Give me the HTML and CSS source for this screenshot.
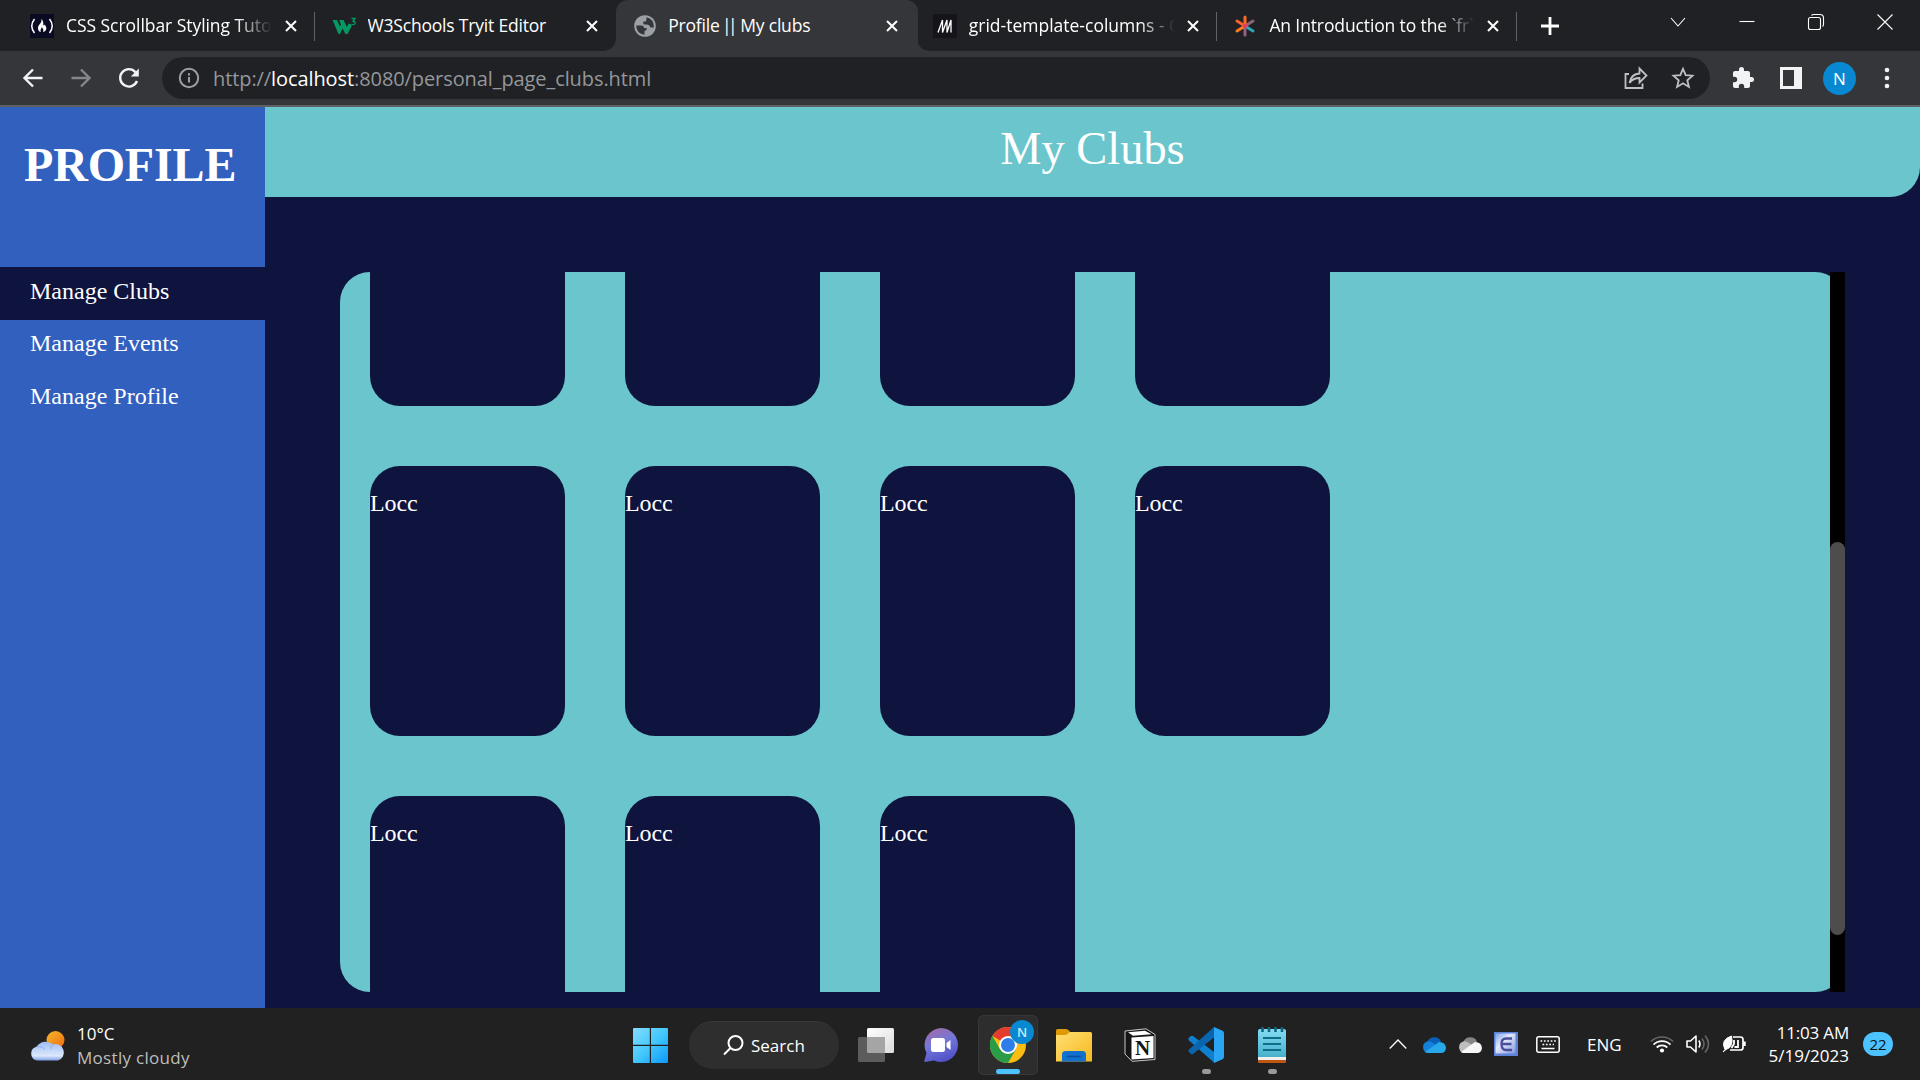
FILE: index.html
```html
<!DOCTYPE html>
<html lang="en">
<head>
<meta charset="utf-8">
<title>Profile || My clubs</title>
<link rel="stylesheet" href="styles.css">
</head>
<body>
<header class="tabs">
  <div class="tab">
    <svg class="fav" viewBox="0 0 24 24"><rect width="24" height="24" fill="#0a0a23"/><path d="M4.500 5Q-1 12 4.500 19M19.500 5Q25 12 19.500 19" fill="none" stroke="#fff" stroke-width="1.500"/><path d="M11 5C13 9 8 10 8 14C8 16.500 9.500 18 11 18C9.500 15.500 12 15 11.500 13C13 14 14 16 13 18C18 17 16.500 12 14.500 10.500C14.500 12.500 13 11.500 13.300 9.500C13.400 7 12.500 6 11 5Z" fill="#fff"/></svg>
    <span class="tab-title fade t1">CSS Scrollbar Styling Tutorial</span>
    <svg class="x" viewBox="0 0 12 12"><path d="M1 1L11 11M11 1L1 11"/></svg>
  </div>
  <div class="tab">
    <svg class="fav" viewBox="0 0 24 24"><path d="M.5 6H5L8 12.500L9 10.500L7.200 6H11.500L15 13L16.500 9.500L19.500 10.500Q20 12 19 13.500L15.500 20H13.500L10.500 14.500L8 20H6.500Z" fill="#059862"/><path d="M19.500 4.500H23L21 7.300Q23.500 7.500 23 9.500Q22 11.500 19.500 10" fill="none" stroke="#059862" stroke-width="1.400"/></svg>
    <span class="tab-title t2">W3Schools Tryit Editor</span>
    <svg class="x" viewBox="0 0 12 12"><path d="M1 1L11 11M11 1L1 11"/></svg>
  </div>
  <div class="tab active">
    <svg class="fav" viewBox="0 0 24 24"><circle cx="13" cy="12" r="10.800" fill="#9aa0a6"/><path d="M4.200 11.500H9.500Q12 11.500 12 14H14.500Q15.500 16 12.500 17V20.700Q4.500 20 4.200 11.500Z" fill="#35363a"/><path d="M14.500 3.300Q22 5 21.800 13.500H18.500Q17.500 10.500 14.500 10.500H12.500Q10.500 10 11.500 7.500H13.500Q14.500 7.500 14.500 3.300Z" fill="#35363a"/></svg>
    <span class="tab-title t3">Profile <span class="bars">||</span> My clubs</span>
    <svg class="x" viewBox="0 0 12 12"><path d="M1 1L11 11M11 1L1 11"/></svg>
  </div>
  <div class="tab">
    <svg class="fav" viewBox="0 0 24 24"><rect width="24" height="24" fill="#15141a"/><path d="M5 18.500L9.500 6V18.500L14 6V18.500M14 18.500L18 6V18.500" fill="none" stroke="#fff" stroke-width="1.300"/></svg>
    <span class="tab-title fade t4">grid-template-columns - CSS</span>
    <svg class="x" viewBox="0 0 12 12"><path d="M1 1L11 11M11 1L1 11"/></svg>
  </div>
  <div class="tab">
    <svg class="fav" viewBox="0 0 24 24" fill="none" stroke-width="3" stroke-linecap="round"><path d="M12 12V21" stroke="#94607f"/><path d="M12 12L20 7" stroke="#8f6473"/><path d="M12 12L20 17" stroke="#2aa7b8"/><path d="M12 12L4 17" stroke="#ff7a18"/><path d="M12 12L4 7" stroke="#f5622d"/><path d="M12 3V12" stroke="#ff6b22"/><circle cx="12" cy="12" r="1.800" fill="#e23a6c" stroke="#e23a6c" stroke-width="1"/></svg>
    <span class="tab-title fade t5">An Introduction to the `fr`</span>
    <svg class="x" viewBox="0 0 12 12"><path d="M1 1L11 11M11 1L1 11"/></svg>
  </div>
  <svg class="newtab" viewBox="0 0 18 18"><path d="M9 0V18M0 9H18"/></svg>
  <div class="winctl">
    <svg viewBox="0 0 16 16"><path d="M1 4L8 12L15 4"/></svg>
    <svg viewBox="0 0 16 16"><path d="M.5 7.500H15.500"/></svg>
    <svg viewBox="0 0 16 16"><rect x=".5" y="3.500" width="12" height="12" rx="2"/><path d="M3.500 1.500Q4 .5 6 .5H12Q15.500 .5 15.500 4V10Q15.500 12 14.500 12.500"/></svg>
    <svg viewBox="0 0 16 16"><path d="M.5 .5L15.500 15.500M15.500 .5L.5 15.500"/></svg>
  </div>
</header>

<div class="toolbar">
  <svg class="nav-ic" viewBox="0 0 24 24"><path d="M21.500 12H4M12 3.500L3.500 12L12 20.500"/></svg>
  <svg class="nav-ic dim" viewBox="0 0 24 24"><path d="M2.500 12H20M12 3.500L20.500 12L12 20.500"/></svg>
  <svg class="nav-ic" viewBox="0 0 24 24"><path d="M20 15A8.700 8.700 0 1 1 18.500 6.200"/><path d="M21.800 2.500V10.500H13.800Z" fill="#f1f3f4" stroke="none"/></svg>
  <div class="omnibox">
    <svg class="info" viewBox="0 0 22 22"><circle cx="11" cy="11" r="9.200"/><path d="M11 10V15.500M11 6.200V8.400"/></svg>
    <span class="url">http://<b>localhost</b>:8080/personal_page_clubs.html</span>
    <svg class="ob-ic" viewBox="0 0 24 24"><path d="M5 8H1.500V22H18.500V17.500"/><path d="M5.500 17Q7 8 15.500 7.500V2.500L22.500 9.500L15.500 16.500V12Q9 12 5.500 17Z"/></svg>
    <svg class="ob-ic star" viewBox="0 0 24 24"><path d="M12 2.800L14.700 9.100L21.500 9.700L16.300 14.200L17.900 20.900L12 17.300L6.100 20.900L7.700 14.200L2.500 9.700L9.300 9.100Z"/></svg>
  </div>
  <svg class="puzzle" viewBox="0 0 24 24"><path d="M20.500 11H19V7C19 5.900 18.100 5 17 5H13V3.500A2.500 2.500 0 0 0 8 3.500V5H4C2.900 5 2 5.900 2 7V10.800H3.500A2.700 2.700 0 0 1 3.500 16.200H2V20C2 21.100 2.900 22 4 22H7.800V20.500A2.700 2.700 0 0 1 13.200 20.500V22H17C18.100 22 19 21.100 19 20V16H20.500A2.500 2.500 0 0 0 20.500 11Z" fill="#f1f3f4"/></svg>
  <svg class="panel-ic" viewBox="0 0 22 22"><path fill-rule="evenodd" d="M0 0H22V22H0ZM3 3V19H14V3Z" fill="#f1f3f4"/></svg>
  <span class="avatar">N</span>
  <svg class="dots" viewBox="0 0 6 22"><circle cx="3" cy="3" r="2.300"/><circle cx="3" cy="11" r="2.300"/><circle cx="3" cy="19" r="2.300"/></svg>
</div>

<div class="page">
  <aside class="sidebar">
    <h1>PROFILE</h1>
    <nav>
      <a class="current">Manage Clubs</a>
      <a>Manage Events</a>
      <a>Manage Profile</a>
    </nav>
  </aside>
  <main>
    <div class="banner">My Clubs</div>
    <section class="clubs">
      <div class="viewport">
        <div class="grid">
          <div class="card"></div><div class="card"></div><div class="card"></div><div class="card"></div>
          <div class="card">Locc</div><div class="card">Locc</div><div class="card">Locc</div><div class="card">Locc</div>
          <div class="card">Locc</div><div class="card">Locc</div><div class="card">Locc</div>
        </div>
      </div>
      <div class="track"><div class="thumb"></div></div>
    </section>
  </main>
</div>

<footer class="taskbar">
  <div class="weather">
    <svg viewBox="0 0 36 32">
      <defs>
        <linearGradient id="sun" x1="0" y1="0" x2="1" y2="1"><stop offset="0" stop-color="#f5b92a"/><stop offset="1" stop-color="#ef6a10"/></linearGradient>
        <linearGradient id="cl" x1="0" y1="0" x2="0" y2="1"><stop offset="0" stop-color="#9dbcf5"/><stop offset=".75" stop-color="#dce8fb"/><stop offset="1" stop-color="#7fa0e6"/></linearGradient>
      </defs>
      <circle cx="25.500" cy="10" r="9" fill="url(#sun)"/>
      <path d="M7 30.500A7 7 0 0 1 6.500 16.800A11 11 0 0 1 23 14.500A8.200 8.200 0 1 1 28 30.500Z" fill="url(#cl)"/>
      <path d="M6.500 16.800Q12 16 15 19.500M21 19Q20.500 15.500 23 14.500" fill="none" stroke="#8fb0ef" stroke-width="1"/>
    </svg>
    <div class="wtext"><span class="w1">10°C</span><span class="w2">Mostly cloudy</span></div>
  </div>
  <div class="apps">
    <svg class="start" viewBox="0 0 35 35">
      <defs><linearGradient id="win" gradientUnits="userSpaceOnUse" x1="0" y1="0" x2="35" y2="35"><stop offset="0" stop-color="#86dcfd"/><stop offset=".5" stop-color="#44c8fb"/><stop offset="1" stop-color="#0c98fb"/></linearGradient></defs>
      <path d="M0 1Q0 0 1 0H16.800V16.800H0ZM18 0H34Q35 0 35 1V16.800H18ZM0 18H16.800V35H1Q0 35 0 34ZM18 18H35V34Q35 35 34 35H18Z" fill="url(#win)"/>
    </svg>
    <div class="search">
      <svg viewBox="0 0 21 21"><circle cx="12.500" cy="8" r="7" /><path d="M7.500 13L1 19.500"/></svg>
      <span>Search</span>
    </div>
    <svg class="taskview" viewBox="0 0 36 34">
      <defs><linearGradient id="tv" x1="0" y1="0" x2="1" y2="1"><stop offset="0" stop-color="#fff"/><stop offset="1" stop-color="#dcdcdc"/></linearGradient></defs>
      <rect x="9" y="0" width="27" height="25" rx="1.500" fill="url(#tv)"/><rect x="0" y="9" width="27" height="25" rx="1.500" fill="#5c5c5c"/><path d="M9 9H27V25H10.500Q9 25 9 23.500Z" fill="#a5a5a5"/></svg>
    <svg class="chat" viewBox="0 0 34 34">
      <defs><linearGradient id="ch" x1=".2" y1="0" x2=".6" y2="1"><stop offset="0" stop-color="#a36aa8"/><stop offset=".45" stop-color="#7478d8"/><stop offset="1" stop-color="#4f50c8"/></linearGradient></defs>
      <path d="M17 0A17 17 0 1 1 10 32.500L1 34Q0 34 .4 32.500L2.500 25A17 17 0 0 1 17 0Z" fill="url(#ch)"/><rect x="7" y="10" width="14" height="14" rx="2.500" fill="#fff"/><path d="M22.500 15L26.500 12V22L22.500 19Z" fill="#fff"/></svg>
    <div class="tile">
      <svg viewBox="0 0 60 60">
        <circle cx="30" cy="30" r="18" fill="#fbbc14"/>
        <path d="M30 30L14.400 21A18 18 0 0 1 45.600 21H30Z" fill="#e33b2e"/>
        <path d="M14.400 21A18 18 0 0 0 30 48L37.800 34.500L22.200 34.500Z" fill="#2a9c48"/>
        <circle cx="30" cy="30" r="9" fill="#fff"/><circle cx="30" cy="30" r="7" fill="#2f7de9"/>
        <circle cx="44" cy="17" r="12" fill="#0788d1"/>
        <text x="44" y="21.800" text-anchor="middle" class="badge-n">N</text>
        <rect x="18" y="54" width="24" height="5" rx="2.500" fill="#4cc2ff"/>
      </svg>
    </div>
    <svg class="folder" viewBox="0 0 36 33">
      <defs><linearGradient id="fo" x1="0" y1="0" x2="1" y2="1"><stop offset="0" stop-color="#ffdf73"/><stop offset="1" stop-color="#f6b91f"/></linearGradient></defs>
      <path d="M0 1.500Q0 0 1.500 0H10Q11.500 0 13 1.500L15 4L10 8H0Z" fill="#dd9a06"/><path d="M0 6H10L14 3H34.500Q36 3 36 4.500V32.500H0Z" fill="url(#fo)"/><path d="M6 32.500V25.500Q6 22 9.500 22H26.500Q30 22 30 25.500V32.500Z" fill="#1271cc"/><path d="M11 27.500H25" stroke="#0b4fa0" stroke-width="1.600"/></svg>
    <svg class="notion" viewBox="0 0 32 34"><path d="M1 3L22 .8L31 6.500V31.500L8 33.300L1 26Z" fill="#151515" stroke="#c9c9c9" stroke-width="1"/><path d="M4 4.200L21 2.700L27.500 6.200L9 7.700Z" fill="#fff"/><path d="M7.500 9.500L29.500 8V30L7.500 31.500Z" fill="#fff"/><text x="18.500" y="27" text-anchor="middle" class="notion-n">N</text></svg>
    <div class="app">
      <svg viewBox="0 0 36 36"><path d="M26 0L26.500 36L1 13.500Q-.5 12 1 10.500L3 9Q4 8.300 5 9L26 25Z" fill="#0f7fd0"/><path d="M26 0V10.500L5 27Q4 27.700 3 27L1 25Q-.5 23.500 1 22.500Z" fill="#0a65ad"/><path d="M26 0L34.500 3.800Q36 4.500 36 6V30Q36 31.500 34.500 32.200L26 36Z" fill="#2aa5f3"/></svg>
      <i></i>
    </div>
    <div class="app pad">
      <svg viewBox="0 0 28 36"><defs><linearGradient id="np" x1="0" y1="0" x2="0" y2="1"><stop offset="0" stop-color="#83dcf2"/><stop offset="1" stop-color="#48b0cc"/></linearGradient></defs><path d="M0 31H28V35Q28 36 27 36H1Q0 36 0 35Z" fill="#bd5610"/><path d="M0 29H28V33H0Z" fill="#f2efed"/><path d="M0 4Q0 2 2 2H26Q28 2 28 4V30H0Z" fill="url(#np)"/><path d="M4.500 0V5M11 0V5M17.500 0V5M24 0V5" stroke="#0e6680" stroke-width="2.600"/><path d="M5 11H23M5 17H23M5 23H23" stroke="#0f6c8a" stroke-width="2"/></svg>
      <i></i>
    </div>
  </div>
  <div class="tray">
    <svg class="chev" viewBox="0 0 18 10"><path d="M.7 9.500L9 1L17.300 9.500" fill="none" stroke="#fff" stroke-width="1.300"/></svg>
    <svg class="cloud" viewBox="0 0 24 17"><path d="M5 7A7.500 7.500 0 0 1 19 5.500L12 12Z" fill="#0a5fb8"/><path d="M6 17A6 6 0 0 1 4.500 5.700Q8 4.500 11 7L17 11L14 17Z" fill="#1380da"/><path d="M3 16L17 6Q23.500 6 24 12Q23.500 17 19 17H6Q4 17 3 16Z" fill="#28a8ea"/></svg>
    <svg class="cloud" viewBox="0 0 24 17"><path d="M5 7A7.500 7.500 0 0 1 19 5.500L12 12Z" fill="#858585"/><path d="M6 17A6 6 0 0 1 4.500 5.700Q8 4.500 11 7L17 11L14 17Z" fill="#bdbdbd"/><path d="M3 16L17 6Q23.500 6 24 12Q23.500 17 19 17H6Q4 17 3 16Z" fill="#f6f6f6"/></svg>
    <svg class="eicon" viewBox="0 0 24 24"><defs><linearGradient id="eg" x1="0" y1="0" x2="1" y2="1"><stop offset="0" stop-color="#7da2ea"/><stop offset=".4" stop-color="#e4e8fb"/><stop offset="1" stop-color="#8098dc"/></linearGradient></defs><rect width="24" height="24" fill="#5e82d8"/><rect x="1.500" y="1.500" width="20" height="20" fill="url(#eg)"/><path d="M18 6.500H12Q7.500 6.500 7.500 12Q7.500 18 12 18H18M8 12H17.500" fill="none" stroke="#4a4f9c" stroke-width="2.400"/></svg>
    <svg class="kbd" viewBox="0 0 24 17" fill="none" stroke="#fff"><rect x=".8" y=".8" width="22.400" height="15.400" rx="2" stroke-width="1.500"/><path d="M4.500 5H20M6.500 8.500H18" stroke-width="1.700" stroke-dasharray="1.700 1.700"/><path d="M5.500 12.500H18.500" stroke-width="1.500"/></svg>
    <span class="lang">ENG</span>
    <svg class="wifi" viewBox="0 0 24 18" fill="none"><path d="M.8 6.500A16 16 0 0 1 23.200 6.500" stroke="#666" stroke-width="1.600"/><path d="M3.500 9.600A12 12 0 0 1 20.500 9.600M6.700 12.500A7.500 7.500 0 0 1 17.300 12.500" stroke="#fff" stroke-width="1.800"/><circle cx="12" cy="15.500" r="2.100" fill="#fff"/></svg>
    <svg class="vol" viewBox="0 0 24 20" fill="none" stroke="#fff" stroke-width="1.600" stroke-linejoin="round"><path d="M1 7H4.500L10 2V18L4.500 13H1Z"/><path d="M12.800 6.500Q15.200 10 12.800 13.500"/><path d="M16 4.500Q20 10 16 15.500M19 1.500Q26 10 19 18.500" stroke="#666"/></svg>
    <svg class="bat" viewBox="0 0 24 18" fill="none" stroke="#fff" stroke-width="1.700"><path d="M11 2H18.500Q21 2 21 4.500V12.500Q21 15 18.500 15H8"/><path d="M22.500 6.500V11" stroke-width="2.400"/><path d="M1 17L3 14.500Q-2 5 9.500 1Q12 12 4 14.500Z" fill="#fff" stroke-width="1"/><path d="M12 5V9L9.500 13M16 5V12H12.500" stroke-width="1.800"/></svg>
    <div class="clock"><span class="c1">11:03 AM</span><span class="c2">5/19/2023</span></div>
    <span class="count">22</span>
  </div>
</footer>
</body>
</html>
```
FILE: styles.css
```css
* { box-sizing: border-box; }
body {
  margin: 0;
  width: 1920px;
  height: 1080px;
  overflow: hidden;
  display: flex;
  flex-direction: column;
  font-family: "Open Sans", "Noto Sans", sans-serif;
  color: #fff;
}
svg { display: block; flex: none; overflow: visible; }

/* tab strip */
.tabs { height: 51px; flex: none; background: #202124; display: flex; align-items: center; padding-left: 14px; }
.tab { width: 300.6px; height: 51px; flex: none; display: flex; align-items: center; padding-left: 16px; position: relative; }
.tab::after { content: ""; position: absolute; left: 300px; top: 12px; width: 1px; height: 29px; background: #5f6368; }
.tab.active::before {
  content: ""; position: absolute; z-index: 0; left: 1px; right: -2px; top: 0; bottom: 0;
  background: #35363a; border-radius: 12px 12px 0 0;
}
.tab.active::after {
  left: -11px; top: auto; bottom: 0; width: 325px; height: 12px;
  background:
    radial-gradient(circle at 0 0, transparent 11.5px, #35363a 12px) left / 12px 12px no-repeat,
    radial-gradient(circle at 100% 0, transparent 11.5px, #35363a 12px) right / 12px 12px no-repeat;
}
.tab:nth-child(2)::after { display: none; }
.tab > * { position: relative; z-index: 1; }
.fav { width: 24px; height: 24px; margin-right: 12px; }
.tab:nth-child(n+2) .fav { margin-left: 1px; }
.tab-title { width: 206px; margin-right: 13px; padding-bottom: 1px; font-size: 17.5px; line-height: 24px; white-space: nowrap; overflow: hidden; }
.tab:nth-child(n+2) .tab-title { margin-right: 12px; }
.t1 { letter-spacing: -0.05px; }
.t2 { letter-spacing: -0.2px; }
.t3 { letter-spacing: -0.2px; }
.bars { letter-spacing: -3.6px; margin: 0 2px 0 -2px; }
.t5 { letter-spacing: -0.12px; }
.fade { -webkit-mask-image: linear-gradient(90deg, #000 170px, transparent 206px); mask-image: linear-gradient(90deg, #000 170px, transparent 206px); }
.x { width: 12px; height: 12px; stroke: #fff; stroke-width: 2; }
.newtab { width: 18px; height: 18px; margin-left: 24px; stroke: #fff; stroke-width: 2.8; }
.winctl { display: flex; gap: 53px; margin: 0 27px 8px auto; }
.winctl svg { width: 16px; height: 16px; fill: none; stroke: #fff; stroke-width: 1.1; }

/* address bar */
.toolbar { height: 56px; flex: none; background: #35363a; border-bottom: 2px solid #5f6063; display: flex; align-items: center; padding-left: 21px; }
.nav-ic { width: 24px; height: 24px; margin-right: 24px; fill: none; stroke: #f1f3f4; stroke-width: 2.4; }
.nav-ic.dim { stroke: #85868a; }
.omnibox { width: 1548px; height: 42px; margin-left: -3px; border-radius: 21px; background: #202124; display: flex; align-items: center; padding-left: 16px; }
.info { width: 22px; height: 22px; fill: none; stroke: #9aa0a6; stroke-width: 2; }
.url { width: 1400px; margin-left: 13px; padding-top: 2px; font-size: 20px; letter-spacing: -0.09px; line-height: 28px; color: #94979b; white-space: nowrap; }
.url b { font-weight: 400; color: #fff; }
.ob-ic { width: 24px; height: 24px; margin-left: 11px; fill: none; stroke: #bdc1c6; stroke-width: 1.8; }
.star { margin-left: 23px; }
.puzzle { width: 24px; height: 24px; margin-left: 21px; }
.panel-ic { width: 22px; height: 22px; margin-left: 25px; }
.avatar { width: 33px; height: 33px; margin-left: 21px; border-radius: 50%; background: #0788d1; font-size: 17px; line-height: 33px; text-align: center; }
.dots { width: 6px; height: 22px; margin-left: 28px; fill: #f1f3f4; }

/* profile page */
.page { height: 901px; flex: none; display: flex; background: #0f143e; font-family: "Liberation Serif", serif; }
.sidebar { width: 265px; background: #3260be; }
.sidebar h1 { margin: 0; height: 160px; padding: 30px 0 0 24px; font-size: 48px; line-height: 55px; font-weight: bold; letter-spacing: -0.15px; }
.sidebar a { display: block; height: 53px; padding: 10px 0 0 30px; font-size: 24px; line-height: 27px; }
.sidebar a.current { padding-top: 11px; background: #0f143e; }
main { flex: 1; }
.banner { height: 90px; padding-top: 16px; background: #6ac5cc; border-bottom-right-radius: 30px; text-align: center; font-size: 46.4px; line-height: 52px; }
.clubs { margin: 75px 75px 0; height: 720px; display: flex; background: #6ac5cc; border-radius: 30px; }
.viewport { flex: 1; overflow: hidden; padding-left: 30px; }
.grid { display: grid; grid-template-columns: repeat(4, 195px); grid-auto-rows: 270px; gap: 60px; margin-top: -136px; }
.card { background: #0f143e; border-radius: 30px; padding-top: 24px; font-size: 24px; line-height: 27px; letter-spacing: -0.1px; }
.track { width: 15px; background: #000; padding-top: 270px; }
.thumb { height: 393px; border-radius: 8px; background: #4d4d4d; }

/* taskbar */
.taskbar { height: 72px; flex: none; background: #212121; display: flex; align-items: center; padding-left: 30px; font-size: 17px; }
.weather { width: 603px; display: flex; align-items: center; }
.weather svg { width: 36px; height: 32px; margin: 4px 11px 0 0; }
.wtext { display: flex; flex-direction: column; line-height: 24px; margin-top: 3px; white-space: nowrap; }
.w2 { color: #bebebe; letter-spacing: 0.3px; }
.apps { width: 756px; display: flex; align-items: center; }
.start { width: 35px; height: 35px; margin-top: 3px; }
.search { width: 150px; height: 48px; margin: 2px 0 0 21px; border-radius: 24px; background: #2e2e2e; border-top: 1px solid #383838; display: flex; align-items: center; padding-left: 34px; }
.search svg { width: 21px; height: 21px; fill: none; stroke: #fff; stroke-width: 2; }
.search span { margin-left: 7px; }
.taskview { width: 36px; height: 34px; margin: 2px 0 0 19px; }
.chat { width: 34px; height: 34px; margin: 2px 0 0 30px; }
.tile { width: 60px; height: 60px; margin: 2px 0 0 20px; border-radius: 6px; background: #2d2d2d; box-shadow: inset 0 0 0 1px #373737; }
.badge-n { font-size: 13px; font-weight: 600; fill: #c9e6f7; }
.folder { width: 36px; height: 33px; margin: 3px 0 0 18px; }
.notion { width: 32px; height: 34px; margin: 2px 0 0 32px; }
.notion-n { font: bold 21px "Liberation Serif", serif; fill: #151515; }
.app { margin: 13px 0 0 32px; display: flex; flex-direction: column; align-items: center; }
.app svg { width: 36px; height: 36px; }
.app.pad { margin-left: 34px; }
.app.pad svg { width: 28px; }
.app i { width: 9px; height: 5px; border-radius: 2.5px; background: #9a9a9a; margin-top: 6px; }
.tray { flex: 1; display: flex; align-items: center; }
.chev { width: 18px; height: 10px; margin-right: 15px; }
.cloud { width: 24px; height: 17px; margin-right: 12px; }
.eicon { width: 24px; height: 24px; }
.kbd { width: 24px; height: 17px; margin-left: 18px; }
.lang { width: 36px; margin-left: 27px; }
.wifi { width: 24px; height: 18px; margin-left: 27px; }
.vol { width: 24px; height: 20px; margin-left: 12px; }
.bat { width: 24px; height: 18px; margin-left: 12px; }
.clock { width: 103px; display: flex; flex-direction: column; align-items: flex-end; line-height: 23px; white-space: nowrap; }
.c1 { letter-spacing: -0.2px; }
.count { width: 30px; height: 24px; margin-left: 14px; border-radius: 12px; background: #4cc2ff; color: #111; font-size: 15px; line-height: 24px; text-align: center; }
```
